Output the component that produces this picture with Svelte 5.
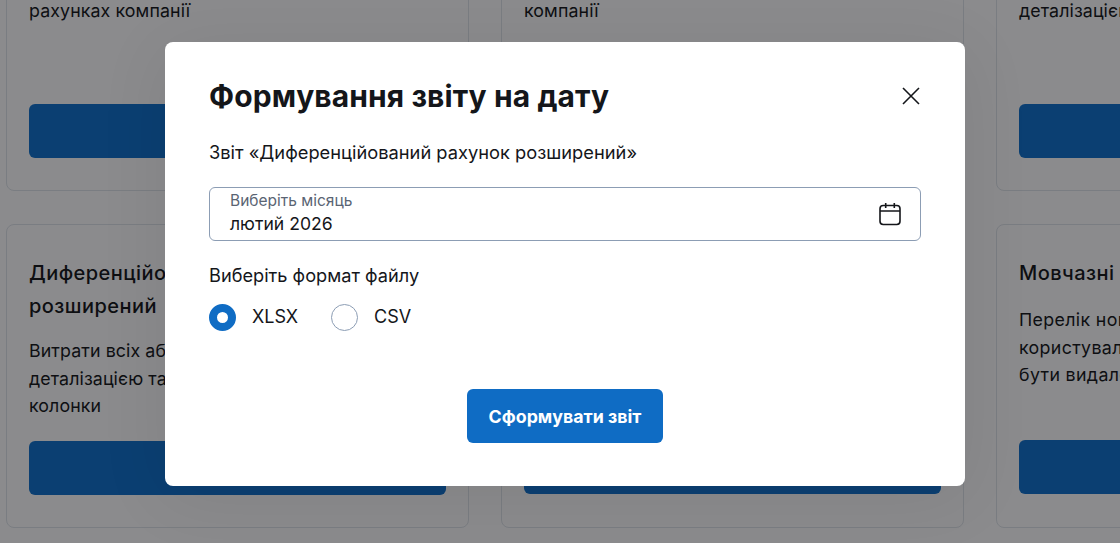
<script>
  const reports = [
    { id: 1, title: [], lines: ['рахунках компанії'], col: 'a' },
    { id: 2, title: [], lines: ['компанії'], col: 'b' },
    { id: 3, title: [], lines: ['деталізацією'], col: 'c' },
    { id: 4, title: ['Диференційований рахунок', 'розширений'], lines: ['Витрати всіх абонентів з', 'деталізацією та додатковими', 'колонки'], col: 'a' },
    { id: 5, title: [], lines: [], col: 'b' },
    { id: 6, title: ['Мовчазні абоненти'], lines: ['Перелік номерів', 'користувалися', 'бути видалені'], col: 'c' }
  ];
</script>

<div class="page">
  <div class="grid">
    {#each reports as r (r.id)}
      <section class="card" class:top={r.id <= 3} class:low={r.id > 3 && r.col !== 'a'}>
        <div class="copy">
          {#if r.title.length}
            <h3>{#each r.title as t}<span>{t}</span>{/each}</h3>
          {/if}
          {#each r.lines as l}<p>{l}</p>{/each}
        </div>
        <div class="cta"></div>
      </section>
    {/each}
  </div>

  <div class="overlay">
    <div class="modal" role="dialog">
      <div class="head">
        <h2>Формування звіту на дату</h2>
        <button class="close" aria-label="Закрити">
          <svg width="24" height="24" viewBox="0 0 24 24" fill="none" stroke="#14161a" stroke-width="1.6"><path d="M4 4l16 16M20 4L4 20"/></svg>
        </button>
      </div>
      <p class="sub">Звіт «Диференційований рахунок розширений»</p>
      <div class="field">
        <div class="vals">
          <span class="lab">Виберіть місяць</span>
          <span class="val">лютий 2026</span>
        </div>
        <svg width="24" height="24" viewBox="0 0 24 24" fill="none" stroke="#14161a" stroke-width="1.6"><rect x="2" y="3.5" width="20" height="19" rx="3.2"/><path d="M2 9h20M7.7 1v5M16.3 1v5"/></svg>
      </div>
      <p class="fmt">Виберіть формат файлу</p>
      <div class="radios">
        <label class="radio"><span class="dot on"></span>XLSX</label>
        <label class="radio"><span class="dot"></span>CSV</label>
      </div>
      <div class="actions"><button class="submit">Сформувати звіт</button></div>
    </div>
  </div>
</div>

<style>
  :global(body) { margin: 0; background: #f2f3f5; }
  .page {
    position: relative;
    height: 543px;
    overflow: hidden;
    font-family: Inter, "Noto Sans", sans-serif;
    color: #14161a;
  }
  .grid {
    display: grid;
    grid-template-columns: repeat(3, 463px);
    grid-template-rows: 240px 304px;
    gap: 33px 32px;
    margin: -49px 0 0 6px;
  }
  .card {
    box-sizing: border-box;
    border: 1px solid #d5d9e0;
    border-radius: 8px;
    padding: 32px 22px;
    display: flex;
    flex-direction: column;
    background: #f2f3f5;
  }
  .copy { flex: 1; min-height: 0; }
  .card.top .copy { padding-top: 13px; }
  .card.low .cta { margin-bottom: 1px; }
  .copy h3 { margin: 0 0 14px; font-size: 20px; line-height: 33px; font-weight: 500; letter-spacing: 0.45px; }
  .card.low .copy h3 { margin-bottom: 16px; }
  .copy h3 span { display: block; }
  .copy p { margin: 0; font-size: 17.8px; line-height: 27.5px; letter-spacing: 0.1px; }
  .card.low .copy p { letter-spacing: 0.35px; }
  .cta { height: 54px; border-radius: 6px; background: #0f6cc4; flex: none; }
  .overlay {
    position: absolute;
    inset: 0;
    background: rgba(6, 6, 8, 0.44);
  }
  .modal {
    position: absolute;
    left: 165px;
    top: 42px;
    width: 800px;
    height: 444px;
    box-sizing: border-box;
    background: #fff;
    border-radius: 8px;
    padding: 34px 44px;
    box-shadow: 0 10px 70px rgba(0, 0, 0, 0.08);
  }
  .head { display: flex; align-items: center; justify-content: space-between; height: 40px; }
  h2 { margin: 0; font-size: 30px; line-height: 40px; font-weight: 700; letter-spacing: 0.1px; }
  .close { border: 0; background: none; padding: 0; width: 24px; height: 24px; margin-right: -2px; display: block; }
  .sub { margin: 24px 0 0; font-size: 18.3px; line-height: 24px; }
  .field {
    box-sizing: border-box;
    margin-top: 23px;
    height: 54px;
    border: 1px solid #8c9db4;
    border-radius: 6px;
    padding: 0 18px 0 20px;
    display: flex;
    align-items: center;
    justify-content: space-between;
  }
  .vals { display: flex; flex-direction: column; }
  .lab { font-size: 15.5px; line-height: 20px; color: #5a6473; }
  .val { font-size: 17.6px; line-height: 26px; }
  .fmt { margin: 22px 0 0; font-size: 18.2px; line-height: 24px; }
  .radios { display: flex; gap: 33px; margin-top: 16px; }
  .radio { display: flex; align-items: center; gap: 16px; font-size: 18px; line-height: 28px; }
  .dot { box-sizing: border-box; width: 27px; height: 27px; border-radius: 50%; border: 1px solid #8c9db4; }
  .dot.on { border: 8px solid #0f6cc4; }
  .actions { display: flex; justify-content: center; margin-top: 58px; }
  .submit {
    width: 196px;
    height: 54px;
    border: 0;
    border-radius: 6px;
    background: #0f6cc4;
    color: #fff;
    font: 700 17.8px Inter, sans-serif;
  }
</style>
